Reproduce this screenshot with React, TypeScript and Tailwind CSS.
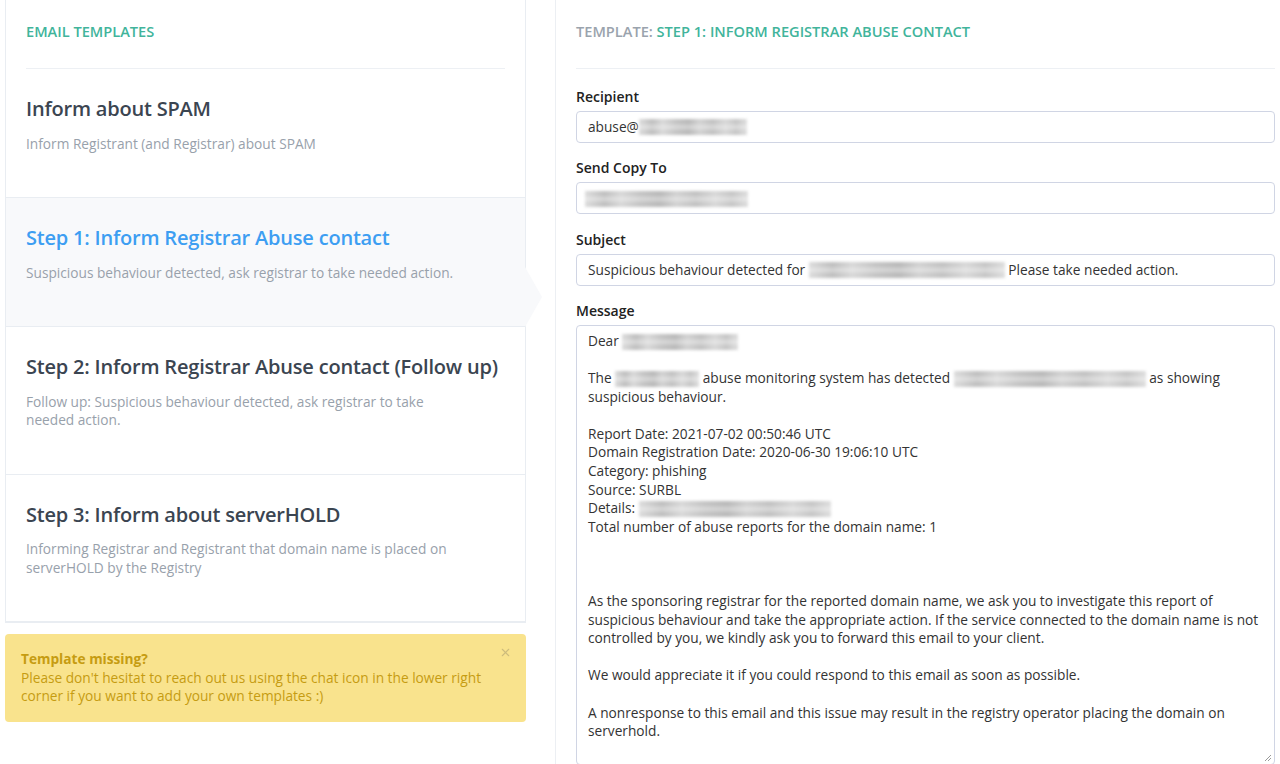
import { X } from "lucide-react";

type Template = { id: string; title: string; description: string };

const templates: Template[] = [
  { id: "spam", title: "Inform about SPAM", description: "Inform Registrant (and Registrar) about SPAM" },
  {
    id: "step1",
    title: "Step 1: Inform Registrar Abuse contact",
    description: "Suspicious behaviour detected, ask registrar to take needed action.",
  },
  {
    id: "step2",
    title: "Step 2: Inform Registrar Abuse contact (Follow up)",
    description: "Follow up: Suspicious behaviour detected, ask registrar to take needed action.",
  },
  {
    id: "step3",
    title: "Step 3: Inform about serverHOLD",
    description: "Informing Registrar and Registrant that domain name is placed on serverHOLD by the Registry",
  },
];

// stand-in for the redacted (pixelated) parts of the screenshot
function Redacted({ w }: { w: number }) {
  return (
    <span
      className="inline-block h-[16px] align-[-4px] blur-[1.5px] bg-[linear-gradient(180deg,transparent_0_25%,rgba(255,255,255,0.35)_45%_55%,transparent_75%),linear-gradient(90deg,#dcdcdc_0,#bfbfbf_12%,#d8d8d8_22%,#c4c4c4_34%,#b9b9b9_46%,#d2d2d2_56%,#c2c2c2_68%,#d8d8d8_80%,#c6c6c6_90%,#dedede_100%)]"
      style={{ width: w }}
    />
  );
}

function TemplateItem({ t, selected }: { t: Template; selected: boolean }) {
  return (
    <div className={`relative border-b border-[#e9edf2] px-5 pt-[26px] pb-[44px] ${selected ? "bg-[#f8f9fb]" : ""}`}>
      <h3
        className={`text-[20px] leading-[28px] font-semibold tracking-[-0.2px] ${
          selected ? "text-[#3d9ef2]" : "text-[#3b4551]"
        }`}
      >
        {t.title}
      </h3>
      <p className="mt-[11.5px] text-[13.7px] leading-[18.5px] text-[#98a1ab] pr-10">{t.description}</p>
      {selected && (
        <span className="absolute left-full top-[69px] w-0 h-0 border-y-[30px] border-y-transparent border-l-[17px] border-l-[#f8f9fb]" />
      )}
    </div>
  );
}

function Field({ label, children, mt }: { label: string; children: React.ReactNode; mt: string }) {
  return (
    <div className={mt}>
      <div className="text-[14px] leading-[20px] font-semibold text-[#222]">{label}</div>
      <div className="mt-[4px]">{children}</div>
    </div>
  );
}

function Input({ children }: { children: React.ReactNode }) {
  return (
    <div className="h-[32px] flex items-center border border-[#d0d5e4] rounded-[4px] px-[11px] text-[13.7px] text-[#333] whitespace-nowrap">
      {children}
    </div>
  );
}

export default function App() {
  return (
    <div className="flex h-[764px] overflow-hidden bg-white font-['Open_Sans',sans-serif]">
      {/* Template list */}
      <div className="w-[555px] shrink-0 pl-[5px] pr-[29px]">
        <div className="border border-t-0 border-[#e9edf2] bg-white">
          <div className="px-5">
            <div className="h-[69px] pt-[21px] border-b border-[#edf0f4] text-[14.6px] leading-[20px] font-semibold uppercase text-[#41b49b]">
              Email Templates
            </div>
          </div>
          {templates.map((t) => (
            <TemplateItem key={t.id} t={t} selected={t.id === "step1"} />
          ))}
        </div>

        <div className="relative mt-[11px] rounded-[4px] bg-[#f9e38d] px-4 pt-[16px] pb-[16px] text-[13.7px] leading-[18.5px] text-[#c69c12]">
          <div className="font-bold">Template missing?</div>
          <div>
            Please don't hesitat to reach out us using the chat icon in the lower right corner if you want to add your
            own templates :)
          </div>
          <X className="absolute right-[14px] top-[12px] text-[#cdbc7c]" size={13} strokeWidth={2} />
        </div>
      </div>

      {/* Template form */}
      <div className="flex-1 border-l border-[#eceff3] pl-5 pr-[5px]">
        <div className="h-[69px] pt-[21px] border-b border-[#edf0f4] text-[14.6px] leading-[20px] font-semibold uppercase">
          <span className="text-[#9aa3ad]">Template: </span>
          <span className="text-[#41b49b]">Step 1: Inform Registrar Abuse contact</span>
        </div>

        <Field label="Recipient" mt="mt-[18px]">
          <Input>
            abuse@
            <Redacted w={108} />
          </Input>
        </Field>

        <Field label="Send Copy To" mt="mt-[15px]">
          <Input>
            <span className="-ml-[3px]">
              <Redacted w={163} />
            </span>
          </Input>
        </Field>

        <Field label="Subject" mt="mt-[16px]">
          <Input>
            Suspicious behaviour detected for&nbsp;
            <Redacted w={196} />
            &nbsp;Please take needed action.
          </Input>
        </Field>

        <Field label="Message" mt="mt-[15px]">
          <div className="relative h-[440px] overflow-hidden border border-[#d0d5e4] rounded-[4px] px-[11px] pt-[6px] text-[13.7px] leading-[18.58px] text-[#333] whitespace-pre-wrap">
            {"Dear "}
            <Redacted w={116} />
            {"\n\nThe "}
            <Redacted w={84} />
            {" abuse monitoring system has detected "}
            <Redacted w={192} />
            {" as showing suspicious behaviour.\n\n"}
            {"Report Date: 2021-07-02 00:50:46 UTC\n"}
            {"Domain Registration Date: 2020-06-30 19:06:10 UTC\n"}
            {"Category: phishing\n"}
            {"Source: SURBL\n"}
            {"Details: "}
            <Redacted w={192} />
            {"\nTotal number of abuse reports for the domain name: 1\n\n\n\n"}
            {
              "As the sponsoring registrar for the reported domain name, we ask you to investigate this report of suspicious behaviour and take the appropriate action. If the service connected to the domain name is not controlled by you, we kindly ask you to forward this email to your client.\n\n"
            }
            {"We would appreciate it if you could respond to this email as soon as possible.\n\n"}
            {"A nonresponse to this email and this issue may result in the registry operator placing the domain on serverhold."}
            <svg className="absolute right-[2px] bottom-[2px]" width="9" height="9" viewBox="0 0 9 9">
              <path d="M8 2L2 8M8 5L5 8" stroke="#9a9a9a" strokeWidth="1" />
            </svg>
          </div>
        </Field>
      </div>
    </div>
  );
}
